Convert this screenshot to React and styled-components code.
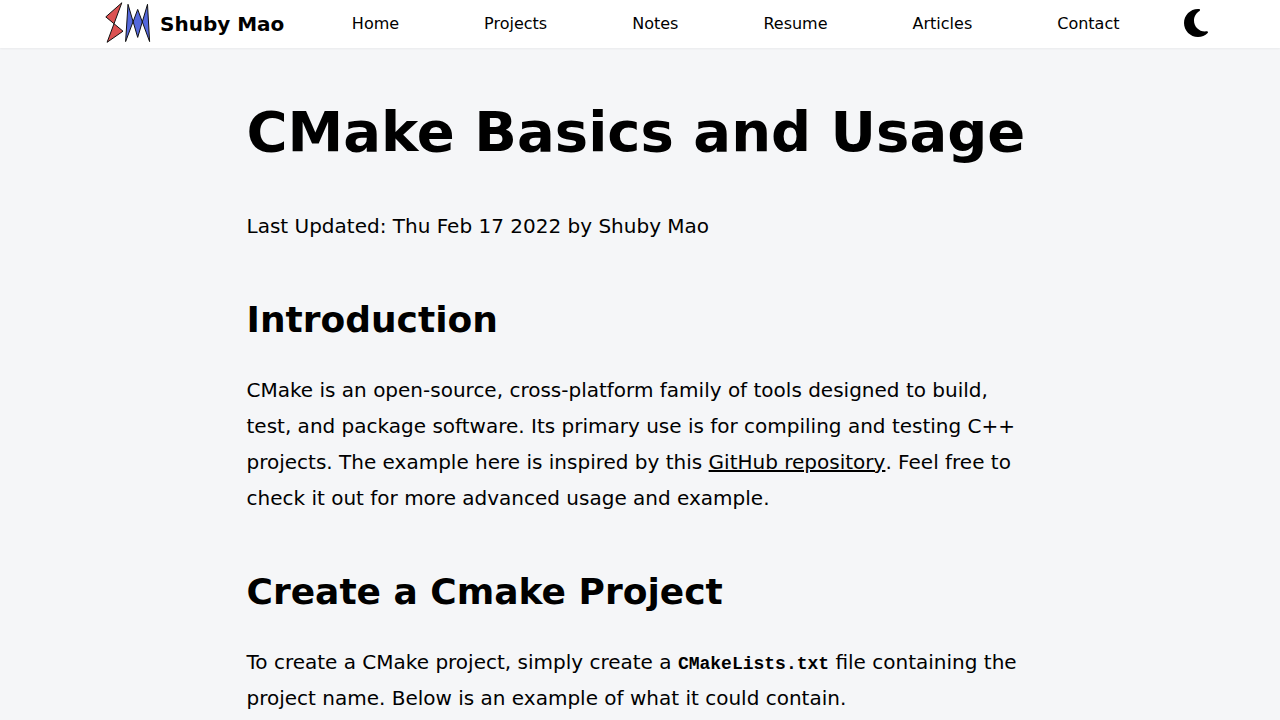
import React from "react";
import styled, { createGlobalStyle } from "styled-components";
import { FaMoon } from "react-icons/fa6";

const GlobalStyle = createGlobalStyle`
  *, *::before, *::after { box-sizing: border-box; }
  body {
    margin: 0;
    background: #f5f6f8;
    color: #000;
    font-family: "DejaVu Sans", sans-serif;
    overflow-x: hidden;
  }
`;

const Header = styled.header`
  display: flex;
  align-items: center;
  height: 48px;
  padding: 0 68px 0 104px;
  background: #fff;
  box-shadow: 0 1px 2px rgba(0, 0, 0, 0.05);
`;

const Brand = styled.a`
  display: flex;
  align-items: center;
  gap: 8px;
  flex: none;
  color: inherit;
  font-size: 20px;
  line-height: 28px;
  font-weight: 700;
  text-decoration: none;
`;

const Nav = styled.nav`
  flex: 1;
  margin: 0 18px 0 25px;
`;

const NavList = styled.ul`
  display: flex;
  justify-content: space-around;
  margin: 0;
  padding: 0;
  list-style: none;
`;

const NavLink = styled.a`
  color: inherit;
  font-size: 16px;
  line-height: 24px;
  text-decoration: none;
`;

const ThemeButton = styled.button`
  display: flex;
  flex: none;
  padding: 0 0 2px;
  border: 0;
  background: none;
  color: #000;
  font-size: 32px;
  cursor: pointer;
`;

const Article = styled.article`
  max-width: 787px;
  margin: 0 auto;
  padding: 56px 0;
  font-size: 20px;
  line-height: 36px;
`;

const Title = styled.h1`
  margin: 0 0 48px;
  font-size: 56px;
  line-height: 56px;
  font-weight: 800;
`;

const Heading = styled.h2`
  margin: 56px 0 32px;
  font-size: 36px;
  line-height: 40px;
  font-weight: 700;
`;

const Paragraph = styled.p`
  margin: 0;
`;

const TextLink = styled.a`
  color: inherit;
  font-weight: 500;
  text-decoration: underline;
`;

const Code = styled.code`
  font-family: "Liberation Mono", monospace;
  font-size: 18px;
  line-height: 20px;
  font-weight: 600;
`;

const links = ["Home", "Projects", "Notes", "Resume", "Articles", "Contact"];

function Logo() {
  return (
    <svg width="48" height="48" viewBox="0 0 48 48" aria-hidden="true" stroke="#111" strokeWidth="1" strokeLinejoin="round">
      <path d="M17.8 2.8L1.8 16.9L19 31.2L3.1 42.3Z" fill="#db5252" />
      <path d="M21.6 41.6L33.7 9.4L45.6 41.6L43.5 4.3L33.7 37.4L24 4.3Z" fill="#5468dc" />
    </svg>
  );
}

export default function App() {
  return (
    <>
      <GlobalStyle />
      <Header>
        <Brand href="#home">
          <Logo />
          Shuby Mao
        </Brand>
        <Nav>
          <NavList>
            {links.map((name) => (
              <li key={name}>
                <NavLink href={`#${name.toLowerCase()}`}>{name}</NavLink>
              </li>
            ))}
          </NavList>
        </Nav>
        <ThemeButton type="button" aria-label="Toggle dark mode">
          <FaMoon />
        </ThemeButton>
      </Header>
      <main>
        <Article>
          <Title>CMake Basics and Usage</Title>
          <Paragraph>Last Updated: Thu Feb 17 2022 by Shuby Mao</Paragraph>
          <Heading>Introduction</Heading>
          <Paragraph>
            CMake is an open-source, cross-platform family of tools designed to build, test, and
            package software. Its primary use is for compiling and testing C++ projects. The example
            here is inspired by this <TextLink href="#repository">GitHub repository</TextLink>. Feel
            free to check it out for more advanced usage and example.
          </Paragraph>
          <Heading>Create a Cmake Project</Heading>
          <Paragraph>
            To create a CMake project, simply create a <Code>CMakeLists.txt</Code> file containing
            the project name. Below is an example of what it could contain.
          </Paragraph>
        </Article>
      </main>
    </>
  );
}
